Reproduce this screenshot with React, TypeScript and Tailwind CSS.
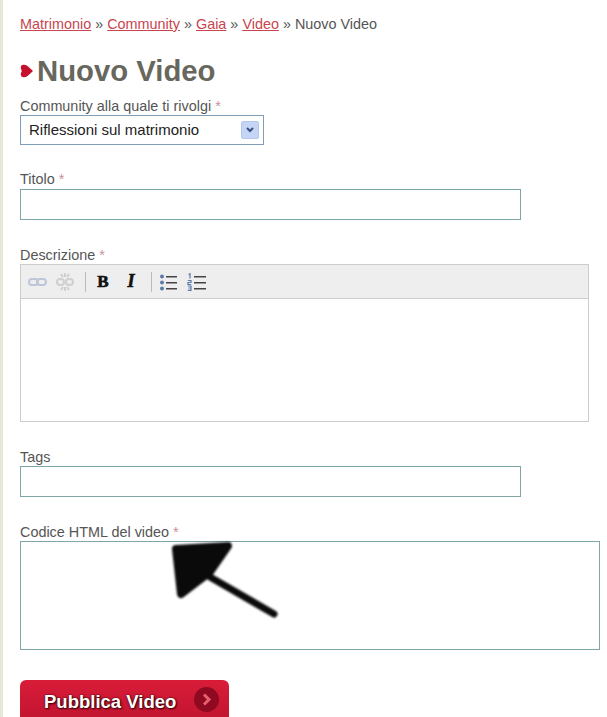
import React from "react";

const Label = ({ text, className = "" }: { text: string; className?: string }) => (
  <div className={`text-[14.4px] leading-[16px] text-[#555] ${className}`}>
    {text} <span className="text-[#c9909c]">*</span>
  </div>
);

const Crumb = ({ children }: { children: React.ReactNode }) => (
  <a className="text-[#c8454f] underline decoration-[#c8454f]">{children}</a>
);

export default function App() {
  return (
    <div className="flex h-[717px] w-[607px] overflow-hidden bg-white font-['Liberation_Sans',Arial,sans-serif]">
      <div className="w-[3px] shrink-0 bg-[#e8e8d8]" />
      <div className="flex-1 pl-[17px]">
        <div className="pt-[16px] text-[14.4px] leading-[16px] text-[#555]">
          <Crumb>Matrimonio</Crumb> » <Crumb>Community</Crumb> » <Crumb>Gaia</Crumb> » <Crumb>Video</Crumb> » Nuovo Video
        </div>

        <div className="mt-[22px] flex h-[34px] items-center">
          <svg width="13" height="14" viewBox="0 0 13 14" className="mr-[4px] shrink-0">
            <path d="M1.5 3.5 C1.5 1 5 1 7 2.5 L12 7 L7 11.5 C5 13 1.5 13 1.5 10.5 C1.5 9 2.5 8 2.5 7 C2.5 6 1.5 5 1.5 3.5 Z" fill="#c5112c" stroke="#c5112c" strokeWidth="1.5" strokeLinejoin="round" />
          </svg>
          <h1 className="text-[29.3px] font-bold leading-[34px] text-[#67675d]">Nuovo Video</h1>
        </div>

        <Label text="Community alla quale ti rivolgi" className="mt-[10px]" />
        <div className="mt-[1px] flex h-[30px] w-[244px] items-center justify-between border border-[#7f9db9] pl-[8px] pr-[4px]">
          <span className="pt-[1px] text-[15px] text-[#222]">Riflessioni sul matrimonio</span>
          <div className="flex h-[18px] w-[18px] items-center justify-center rounded-[2px] border border-[#b5c8ec] bg-[#c5d5f5]">
            <svg width="10" height="8" viewBox="0 0 10 8">
              <path d="M2 2 L5 5 L8 2" fill="none" stroke="#3a4f80" strokeWidth="2" />
            </svg>
          </div>
        </div>

        <Label text="Titolo" className="mt-[26px]" />
        <div className="mt-[2px] h-[31px] w-[501px] border border-[#7fa6a6]" />

        <Label text="Descrizione" className="mt-[27px]" />
        <div className="mt-[1px] h-[158px] w-[569px] border border-[#ccc]">
          <div className="flex h-[34px] items-center border-b border-[#ccc] bg-[#eeeeee] pl-[7px]">
            <svg width="20" height="14" viewBox="0 0 20 14" className="mr-[7px]">
              <g fill="none" stroke="#bcc6d8" strokeWidth="2">
                <rect x="1" y="4" width="9" height="6" rx="3" />
                <rect x="9" y="4" width="9" height="6" rx="3" />
              </g>
            </svg>
            <svg width="20" height="20" viewBox="0 0 20 20" className="mr-[10px]">
              <g fill="none" stroke="#d0d0d0" strokeWidth="2">
                <rect x="2" y="7" width="7" height="6" rx="3" />
                <rect x="11" y="7" width="7" height="6" rx="3" />
                <path d="M10 1 V5 M6 2 L8 5 M14 2 L12 5 M10 15 V19 M6 18 L8 15 M14 18 L12 15" />
              </g>
            </svg>
            <div className="mr-[11px] h-[20px] w-px bg-[#bbb]" />
            <span className="mr-[16px] w-[12px] text-center font-['Liberation_Serif',serif] text-[17px] font-bold text-[#111] [-webkit-text-stroke:0.6px_#111]">B</span>
            <span className="mr-[14px] w-[12px] text-center font-['Liberation_Serif',serif] text-[18px] font-bold italic text-[#111] [-webkit-text-stroke:0.6px_#111]">I</span>
            <div className="mr-[8px] h-[20px] w-px bg-[#bbb]" />
            <svg width="18" height="18" viewBox="0 0 18 18" className="mr-[9px]">
              <g fill="#5b7aa8">
                <circle cx="2" cy="3.5" r="2" />
                <circle cx="2" cy="9.5" r="2" />
                <circle cx="2" cy="15.5" r="2" />
              </g>
              <g fill="#444">
                <rect x="6" y="3" width="11" height="1.5" />
                <rect x="6" y="9" width="11" height="1.5" />
                <rect x="6" y="15" width="11" height="1.5" />
              </g>
            </svg>
            <svg width="19" height="18" viewBox="0 0 19 18">
              <g fill="none" stroke="#5b7aa8" strokeWidth="1.2">
                <path d="M1.5 1.5 L3 0.8 V5.5" />
                <path d="M0.8 7.5 H4 V9.5 H1 V11.5 H4.2" />
                <path d="M0.8 13 H4 V15 H1.5 M4 15 V17.4 H0.8" />
              </g>
              <g fill="#444">
                <rect x="7" y="3" width="12" height="1.5" />
                <rect x="7" y="9" width="12" height="1.5" />
                <rect x="7" y="15" width="12" height="1.5" />
              </g>
            </svg>
          </div>
        </div>

        <div className="mt-[27px] text-[14.4px] leading-[16px] text-[#555]">Tags</div>
        <div className="mt-[1px] h-[31px] w-[501px] border border-[#7fa6a6]" />

        <Label text="Codice HTML del video" className="mt-[27px]" />
        <div className="relative mt-[1px] h-[109px] w-[580px] border border-[#7fa6a6]">
          <svg width="120" height="90" viewBox="0 0 120 90" className="absolute left-[145px] top-[-2px]">
            <g style={{ filter: "blur(1.2px)" }}>
              <path d="M10 9 L62 6 L44 32 L15 54 Z" fill="#0a0a0a" stroke="#0a0a0a" strokeWidth="8" strokeLinejoin="round" />
              <path d="M44 37 L108 74" stroke="#0a0a0a" strokeWidth="7" strokeLinecap="round" />
            </g>
          </svg>
        </div>

        <div className="mt-[30px] flex h-[44px] w-[209px] items-start rounded-[6px] bg-gradient-to-b from-[#d81c38] to-[#c01430] pl-[24px] pt-[12px]">
          <span className="text-[18.5px] font-bold leading-[20px] text-white [text-shadow:0_0_2px_#300,1px_1px_2px_#300]">Pubblica Video</span>
          <div className="ml-[18px] -mt-[5px] flex h-[25px] w-[25px] items-center justify-center rounded-full bg-[#8f0a20]">
            <svg width="13" height="13" viewBox="0 0 13 13">
              <path d="M4 1.5 L9 6.5 L4 11.5" fill="none" stroke="#e5606f" strokeWidth="3" />
            </svg>
          </div>
        </div>
      </div>
    </div>
  );
}
